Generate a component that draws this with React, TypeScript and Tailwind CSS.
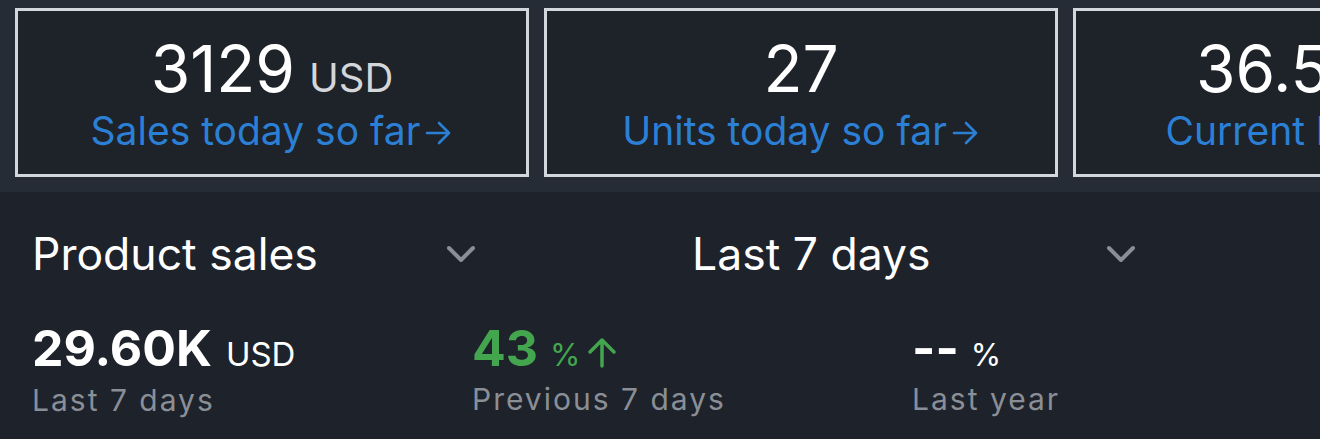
import React from "react";

function Card({ value, unit, label }: { value: string; unit?: string; label: string }) {
  return (
    <div className="w-[514px] shrink-0 h-[169px] border-[3px] border-[#d3d6da] bg-[#1e2229] flex flex-col items-center pt-[22px]">
      <div className="flex items-baseline h-[74px] overflow-visible">
        <span className="text-[64px] text-white leading-[72px]">{value}</span>
        {unit && <span className="ml-[14px] text-[40px] leading-[48px] text-[#d4d6d9]">{unit}</span>}
      </div>
      <div className="text-[39px] leading-[48px] text-[#2b80d6] flex items-center whitespace-nowrap">
        <span>{label}</span>
        <svg width="30" height="30" viewBox="0 0 30 30" className="ml-[3px] mt-[4px]" fill="none" stroke="#2b80d6" strokeWidth="2.6" strokeLinecap="round" strokeLinejoin="round">
          <path d="M4 15 H26 M16 5 L26 15 L16 25" />
        </svg>
      </div>
    </div>
  );
}

function Chevron() {
  return (
    <svg width="32" height="22" viewBox="0 0 32 22" fill="none" stroke="#8a8e96" strokeWidth="4" strokeLinecap="round" strokeLinejoin="round">
      <path d="M4 5 L16 17 L28 5" />
    </svg>
  );
}

export default function App() {
  return (
    <div className="w-[1320px] h-[439px] overflow-hidden bg-[#1e222a]" style={{ fontFamily: "Inter, 'Liberation Sans', sans-serif" }}>
      <div className="h-[192px] bg-[#262c35] flex gap-[15px] pl-[15px] pt-[8px] overflow-hidden">
        <Card value="3129" unit="USD" label="Sales today so far" />
        <Card value="27" label="Units today so far" />
        <Card value="36.57" unit="USD" label="Current balance" />
      </div>
      <div className="grid grid-cols-[660px_660px] pl-[32px] pt-[30px]">
        <div className="flex items-center w-[445px] justify-between">
          <span className="text-[44.5px] leading-[64px] text-white">Product sales</span>
          <Chevron />
        </div>
        <div className="flex items-center w-[445px] justify-between">
          <span className="text-[44.5px] leading-[64px] text-white">Last 7 days</span>
          <Chevron />
        </div>
      </div>
      <div className="grid grid-cols-[440px_440px_440px] pl-[32px] pt-[34px]">
        <div>
          <div className="flex items-baseline">
            <span className="text-[50px] leading-[56px] font-bold text-white">29.60K</span>
            <span className="ml-[14px] text-[33px] text-white">USD</span>
          </div>
          <div className="text-[30px] leading-[40px] text-[#8a8f97] tracking-[2px]">Last 7 days</div>
        </div>
        <div>
          <div className="flex items-baseline">
            <span className="text-[50px] leading-[56px] font-bold text-[#43a64f]">43</span>
            <span className="ml-[12px] text-[31px] text-[#43a64f]">%</span>
            <svg width="32" height="32" viewBox="0 0 32 32" className="ml-[5px] self-center mt-[6px]" fill="none" stroke="#43a64f" strokeWidth="3.5" strokeLinecap="round" strokeLinejoin="round">
              <path d="M16 30 V4 M4 16 L16 4 L28 16" />
            </svg>
          </div>
          <div className="text-[30px] leading-[40px] text-[#8a8f97] tracking-[2px]">Previous 7 days</div>
        </div>
        <div>
          <div className="flex items-baseline">
            <span className="text-[50px] leading-[56px] font-bold text-white">--</span>
            <span className="ml-[12px] text-[31px] text-white">%</span>
          </div>
          <div className="text-[30px] leading-[40px] text-[#8a8f97] tracking-[2px]">Last year</div>
        </div>
      </div>
    </div>
  );
}
